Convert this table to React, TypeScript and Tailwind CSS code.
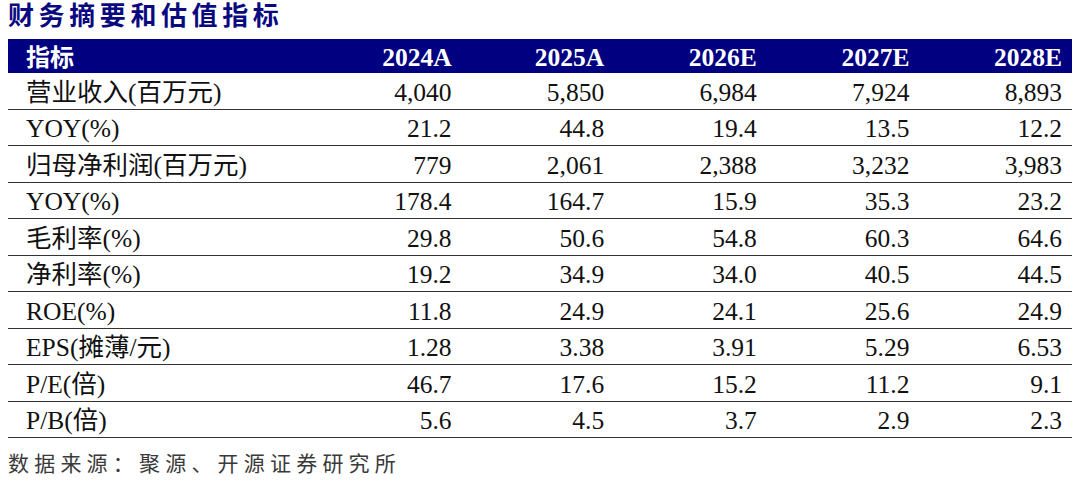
import React from 'react';

const years = ['2024A', '2025A', '2026E', '2027E', '2028E'];

const rows: [string, string[]][] = [
    ['营业收入(百万元)', ['4,040', '5,850', '6,984', '7,924', '8,893']],
    ['YOY(%)', ['21.2', '44.8', '19.4', '13.5', '12.2']],
    ['归母净利润(百万元)', ['779', '2,061', '2,388', '3,232', '3,983']],
    ['YOY(%)', ['178.4', '164.7', '15.9', '35.3', '23.2']],
    ['毛利率(%)', ['29.8', '50.6', '54.8', '60.3', '64.6']],
    ['净利率(%)', ['19.2', '34.9', '34.0', '40.5', '44.5']],
    ['ROE(%)', ['11.8', '24.9', '24.1', '25.6', '24.9']],
    ['EPS(摊薄/元)', ['1.28', '3.38', '3.91', '5.29', '6.53']],
    ['P/E(倍)', ['46.7', '17.6', '15.2', '11.2', '9.1']],
    ['P/B(倍)', ['5.6', '4.5', '3.7', '2.9', '2.3']],
];

export default function App() {
    return (
        <div className="w-[1080px] h-[488px] bg-white px-2 font-['Liberation_Serif','Noto_Sans_CJK_SC',serif]">
            <h1 className="h-[39px] text-[26px] leading-[33px] font-bold tracking-[4.6px] text-[#0a0a80]">
                财务摘要和估值指标
            </h1>

            {/* 表头 */}
            <div className="grid grid-cols-[301px_repeat(5,1fr)] h-[34px] items-center bg-[#000080] text-white font-bold text-[25.5px]">
                <div className="pl-[18px] text-[24px]">指标</div>
                {years.map((y) => (
                    <div key={y} className="text-right pr-[10px]">{y}</div>
                ))}
            </div>

            {rows.map(([label, values], i) => (
                <div
                    key={i}
                    className="grid grid-cols-[301px_repeat(5,1fr)] h-[36.5px] items-center border-b border-[#333333] text-[25.5px] text-[#111111] leading-none pt-[3px]"
                >
                    <div className="pl-[18px]">{label}</div>
                    {values.map((v, j) => (
                        <div key={j} className="text-right pr-[10px]">{v}</div>
                    ))}
                </div>
            ))}

            <p className="mt-[11px] text-[21px] tracking-[5.2px] text-[#3a3a3a]">
                数据来源：聚源、开源证券研究所
            </p>
        </div>
    );
}
